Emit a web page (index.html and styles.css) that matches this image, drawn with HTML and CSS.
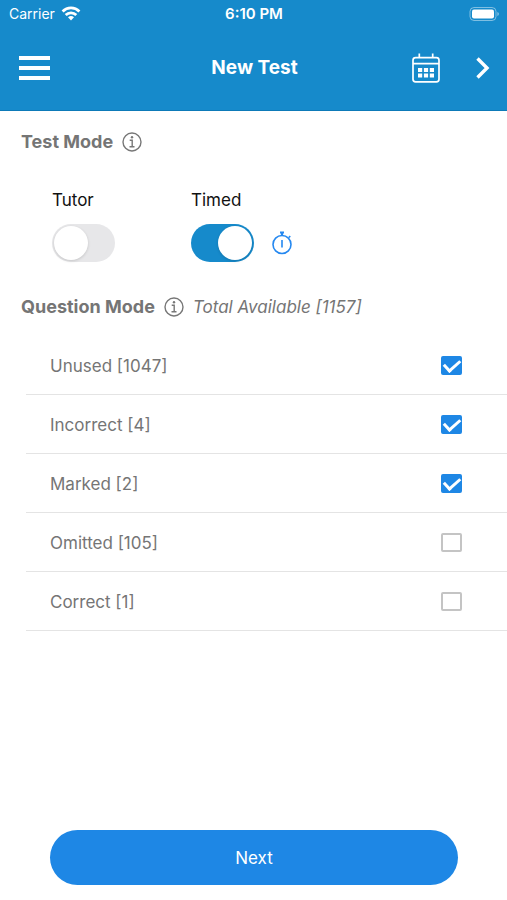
FILE: index.html
```html
<!DOCTYPE html>
<html lang="en">
<head>
<meta charset="utf-8">
<meta name="viewport" content="width=device-width, initial-scale=1">
<title>New Test</title>
<link rel="stylesheet" href="styles.css">
</head>
<body>
<header class="top">
  <div class="status">
    <span class="carrier">Carrier
      <svg width="20" height="16" viewBox="0 0 20 16" fill="none" stroke="#fff" stroke-width="2.800" aria-hidden="true"><path d="M1.600 5.400a12 12 0 0 1 16.800 0M4.700 9a7.600 7.600 0 0 1 10.600 0"/><path d="M10 14.500l-3-3.200a4.400 4.400 0 0 1 6 0z" fill="#fff" stroke="none"/></svg>
    </span>
    <span class="clock">6:10 PM</span>
    <svg class="battery" width="30" height="14" viewBox="0 0 30 14" aria-hidden="true"><rect x="1" y=".5" width="26" height="13" rx="4" fill="none" stroke="#fff" stroke-opacity=".45"/><rect x="3" y="2.500" width="22" height="9" rx="2" fill="#fff"/><path d="M28.300 5v4q1.700-.7 1.700-2t-1.700-2z" fill="#fff" fill-opacity=".45"/></svg>
  </div>
  <nav class="bar">
    <button class="icon-button" aria-label="Menu"><svg width="32" height="26" viewBox="0 0 32 26" fill="#fff"><path d="M0 1h31v4H0zM0 11h31v4H0zM0 21h31v4H0z"/></svg></button>
    <h1>New Test</h1>
    <div class="actions">
      <button class="icon-button" aria-label="Calendar"><svg width="28" height="30" viewBox="0 0 28 30" fill="none" stroke="#fff" stroke-width="1.700"><rect x="1" y="4.600" width="26" height="24.200" rx="2.600"/><path d="M1 10.600h26M7.300.5v4.100M20.700.5v4.100"/><path d="M6 15h4.200v4H6zM11.900 15h4.200v4h-4.200zM17.800 15H22v4h-4.200zM6 20.500h4.200v4H6zM11.900 20.500h4.200v4h-4.200zM17.800 20.500H22v4h-4.200z" fill="#fff" stroke="none"/></svg></button>
      <button class="icon-button" aria-label="Forward"><svg width="14" height="22" viewBox="0 0 14 22" fill="none" stroke="#fff" stroke-width="3.400"><path d="M1.500 1.500L11 11l-9.500 9.500"/></svg></button>
    </div>
  </nav>
</header>
<main>
  <section>
    <div class="heading">
      <h2>Test Mode</h2>
      <button class="icon-button" aria-label="About test mode"><svg width="20" height="20" viewBox="0 0 20 20" fill="none" stroke="#777"><circle cx="10" cy="10" r="9" stroke-width="1.400"/><path d="M7.700 8.300h2.500v6.500M7.500 14.800h5" stroke-width="1.400"/><circle cx="10" cy="5.200" r="1.200" fill="#777" stroke="none"/></svg></button>
    </div>
    <div class="modes">
      <div class="mode">
        <label for="tutor">Tutor</label>
        <input class="switch" type="checkbox" role="switch" id="tutor">
      </div>
      <div class="mode">
        <label for="timed">Timed</label>
        <div class="switch-line">
          <input class="switch" type="checkbox" role="switch" id="timed" checked>
          <svg width="22" height="24" viewBox="0 0 22 24" fill="none" stroke="#2588f0" stroke-width="1.600" aria-hidden="true"><circle cx="11" cy="13.500" r="9"/><path d="M11 9v7.500M17.800 6.500l1.500-1.300"/><path d="M9 1.500h4M11 1.500v3" stroke-width="2.200"/></svg>
        </div>
      </div>
    </div>
  </section>
  <section>
    <div class="heading">
      <h2>Question Mode</h2>
      <button class="icon-button" aria-label="About question mode"><svg width="20" height="20" viewBox="0 0 20 20" fill="none" stroke="#777"><circle cx="10" cy="10" r="9" stroke-width="1.400"/><path d="M7.700 8.300h2.500v6.500M7.500 14.800h5" stroke-width="1.400"/><circle cx="10" cy="5.200" r="1.200" fill="#777" stroke="none"/></svg></button>
      <em>Total Available [1157]</em>
    </div>
    <ul class="list">
      <li><label for="unused">Unused [1047]</label><input class="tick" type="checkbox" id="unused" checked></li>
      <li><label for="incorrect">Incorrect [4]</label><input class="tick" type="checkbox" id="incorrect" checked></li>
      <li><label for="marked">Marked [2]</label><input class="tick" type="checkbox" id="marked" checked></li>
      <li><label for="omitted">Omitted [105]</label><input class="tick" type="checkbox" id="omitted"></li>
      <li><label for="correct">Correct [1]</label><input class="tick" type="checkbox" id="correct"></li>
    </ul>
  </section>
</main>
<footer>
  <button class="next">Next</button>
</footer>
</body>
</html>
```
FILE: styles.css
```css
* {
  box-sizing: border-box;
}

body {
  margin: 0;
  min-height: 100vh;
  display: flex;
  flex-direction: column;
  background: #fff;
  color: #757575;
  font: 17px/24px Inter, "Liberation Sans", sans-serif;
}

button {
  font: inherit;
  border: 0;
  cursor: pointer;
}

svg {
  display: block;
}

h1,
h2 {
  margin: 0;
  font-size: 18px;
  font-weight: 700;
}

.top {
  background: #168acb;
  color: #fff;
  border-bottom: 1px solid #0d7ab8;
}

.status,
.bar {
  display: grid;
  grid-template-columns: 1fr auto 1fr;
  align-items: center;
}

.status {
  height: 27px;
  padding: 0 8px 0 9px;
  font-size: 14px;
}

.carrier {
  display: flex;
  align-items: center;
  gap: 6px;
}

.clock {
  font-weight: 600;
  font-size: 15px;
}

.battery {
  justify-self: end;
}

.bar {
  height: 83px;
  padding: 0 17px 2px 19px;
}

.bar h1 {
  font-size: 19px;
}

.actions {
  display: flex;
  align-items: center;
  justify-content: flex-end;
  gap: 36px;
}

.icon-button {
  padding: 0;
  background: none;
  justify-self: start;
}

main {
  flex: 1;
}

.heading {
  display: flex;
  align-items: center;
  gap: 9px;
  padding: 19px 21px 0;
}

.modes {
  display: flex;
  gap: 76px;
  padding: 34px 52px 14px;
}

.mode {
  display: flex;
  flex-direction: column;
  gap: 12px;
  color: #111;
}

.switch-line {
  display: flex;
  align-items: center;
  gap: 17px;
}

.switch {
  appearance: none;
  display: flex;
  align-items: center;
  width: 63px;
  height: 38px;
  margin: 0;
  padding: 2px;
  border-radius: 20px;
  background: #e7e7e9;
}

.switch::before {
  content: "";
  width: 34px;
  height: 34px;
  border-radius: 50%;
  background: #fff;
  box-shadow: 0 1px 3px rgba(0, 0, 0, 0.15);
}

.switch:checked {
  justify-content: flex-end;
  background: #168acb;
}

.list {
  margin: 17px 0 0 26px;
  padding: 0;
  list-style: none;
}

.list li {
  display: flex;
  align-items: center;
  justify-content: space-between;
  height: 59px;
  padding: 1px 45px 0 24px;
  border-bottom: 1px solid #e4e4e4;
}

.tick {
  appearance: none;
  width: 21px;
  height: 19px;
  margin: 0;
  border: 2px solid #c4c4c4;
  border-radius: 2px;
}

.tick:checked {
  display: grid;
  place-items: center;
  border-color: #1e87e5;
  background: #1e87e5;
}

.tick:checked::before {
  content: "";
  width: 13px;
  height: 7px;
  margin-bottom: 3px;
  border: solid #fff;
  border-width: 0 0 3px 3px;
  transform: rotate(-42deg);
}

footer {
  padding: 0 49px 15px 50px;
}

.next {
  width: 100%;
  height: 55px;
  border-radius: 28px;
  background: #1e87e5;
  color: #fff;
}
```
